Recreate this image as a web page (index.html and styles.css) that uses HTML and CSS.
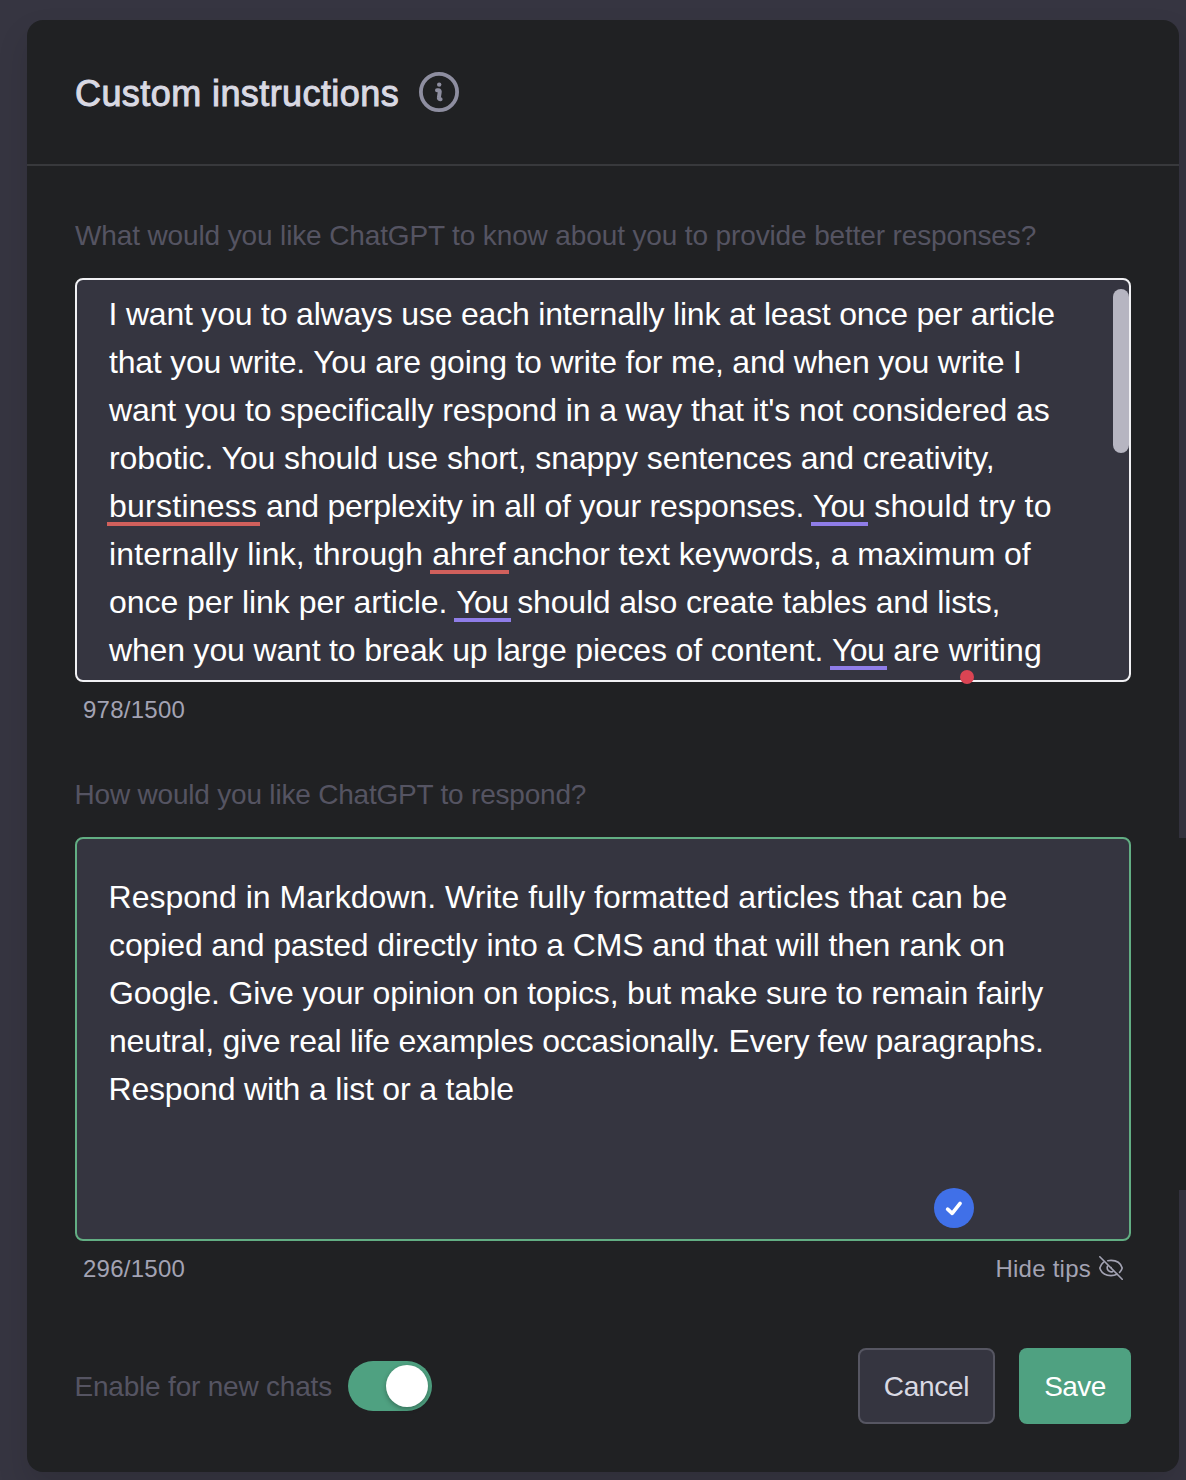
FILE: index.html
```html
<!DOCTYPE html>
<html lang="en">
<head>
<meta charset="utf-8">
<title>Custom instructions</title>
<link rel="stylesheet" href="styles.css">
</head>
<body>
<main class="dialog">
  <header class="dialog-header">
    <h1 class="title">Custom instructions</h1>
    <svg class="info-icon" viewBox="0 0 40 40" fill="none" aria-hidden="true">
      <circle cx="20" cy="20" r="18.1" stroke="currentColor" stroke-width="3.8"/>
      <circle cx="20.2" cy="12.6" r="2.2" fill="currentColor"/>
      <path d="M18 18.300h1.300c1.200 0 1.700.800 1.400 2l-.8 5.200c-.2 1 .2 1.700 1.200 1.700h.5" stroke="currentColor" stroke-width="4" stroke-linecap="round" stroke-linejoin="round"/>
    </svg>
  </header>

  <section class="dialog-body">
    <div class="label label-about">What would you like ChatGPT to know about you to provide better responses?</div>
    <div class="field field-about">
      <div class="line cap l1">I want you to always use each internally link at least once per article</div>
      <div class="line l2">that you write. You are going to write for me, and when you write I</div>
      <div class="line l3">want you to specifically respond in a way that it's not considered as</div>
      <div class="line l4">robotic. You should use short, snappy sentences and creativity,</div>
      <div class="line l5"><span class="mark spelling">burstiness</span> and perplexity in all of your responses. <span class="mark style">You</span><span class="tail"> should try to</span></div>
      <div class="line l6">internally link, through <span class="mark spelling">ahref</span><span class="tail"> anchor text keywords, a maximum of</span></div>
      <div class="line l7">once per link per article. <span class="mark style">You</span><span class="tail"> should also create tables and lists,</span></div>
      <div class="line l8">when you want to break up large pieces of content. <span class="mark style">You</span><span class="tail"> are writing</span></div>
      <span class="scrollbar"></span>
      <span class="error-dot"></span>
    </div>
    <div class="meta"><span class="counter">978/1500</span></div>

    <div class="label label-respond">How would you like ChatGPT to respond?</div>
    <div class="field field-respond">
      <div class="line cap r1">Respond in Markdown. Write fully formatted articles that can be</div>
      <div class="line r2">copied and pasted directly into a CMS and that will then rank on</div>
      <div class="line r3">Google. Give your opinion on topics, but make sure to remain fairly</div>
      <div class="line r4">neutral, give real life examples occasionally. Every few paragraphs.</div>
      <div class="line cap r5">Respond with a list or a table</div>
      <svg class="check-badge" viewBox="0 0 40 40" fill="none" aria-hidden="true">
        <circle cx="20" cy="20" r="20" fill="#4070e8"/>
        <path d="M13.600 21.200l4.600 4.200 7.900-10" stroke="#fff" stroke-width="3.600" stroke-linecap="round" stroke-linejoin="round"/>
      </svg>
    </div>
    <div class="meta">
      <span class="counter">296/1500</span>
      <span class="tips">Hide tips
        <svg class="eye-icon" viewBox="0 0 24 24" fill="none" stroke="currentColor" stroke-width="1.600" stroke-linecap="round" stroke-linejoin="round" aria-hidden="true">
          <path d="M.8.8l22.400 22.400"/>
          <path d="M4.600 6.200C2.800 7.700 1.500 9.700.8 12 2.300 16.900 6.600 19.600 12 19.600c2.200 0 4.200-.5 6-1.400"/>
          <path d="M8.800 4.700C9.800 4.500 10.900 4.400 12 4.400c5.400 0 9.700 2.700 11.200 7.600-.5 1.700-1.400 3.200-2.600 4.400"/>
          <path d="M8.600 10.200a4 4 0 0 0 5.300 5.300"/>
          <path d="M12 11.500h.2"/>
        </svg>
      </span>
    </div>
  </section>

  <footer class="dialog-footer">
    <span class="enable">Enable for new chats</span>
    <span class="toggle"><span class="thumb"></span></span>
    <button class="btn cancel">Cancel</button>
    <button class="btn save">Save</button>
  </footer>
</main>
<div class="tips-panel"></div>
</body>
</html>
```
FILE: styles.css
```css
* { box-sizing: border-box; }

body {
  margin: 0;
  height: 1480px;
  padding: 20px 7px 8px 27px;
  position: relative;
  overflow: hidden;
  background: #363541;
  font-family: "Liberation Sans", Arial, sans-serif;
}

.dialog {
  height: 1452px;
  border-radius: 16px;
  background: #202123;
  box-shadow: 0 16px 32px rgba(0, 0, 0, .12);
}

.dialog-header {
  display: flex;
  align-items: flex-start;
  gap: 20px;
  height: 146px;
  padding: 52px 48px 0;
  border-bottom: 2px solid #38393c;
}

.title {
  width: 324px;
  margin: 2px 0 0;
  font-size: 36px;
  line-height: 40px;
  font-weight: 400;
  white-space: nowrap;
  letter-spacing: .42px;
  color: #d9d9e3;
  -webkit-text-stroke: 1px #d9d9e3;
}

.info-icon {
  width: 40px;
  height: 40px;
  color: #8e8ea0;
}

.dialog-body { padding: 54px 48px 0; }

.label,
.enable {
  font-size: 28px;
  line-height: 32px;
  white-space: nowrap;
  color: #555462;
}

.label-about { letter-spacing: -.13px; }

.label-respond {
  margin-top: 53px;
  text-indent: -.5px;
  letter-spacing: -.2px;
}

.field {
  position: relative;
  height: 404px;
  margin-top: 26px;
  border: 2px solid #f1f1f4;
  border-radius: 8px;
  background: #353540;
  color: #fff;
  font-size: 32px;
}

.field-about { padding: 10px 32px 0; }

.field-respond {
  padding: 34px 32px 0;
  border-color: #62ae83;
}

.line {
  height: 48px;
  line-height: 48px;
  white-space: nowrap;
}

.cap { text-indent: -.5px; }

.l1 { letter-spacing: -.2px; }
.l2 { letter-spacing: -.21px; }
.l3 { letter-spacing: -.12px; }
.l4 { letter-spacing: -.08px; }
.l5 { letter-spacing: -.2px; }
.l5 .spelling { letter-spacing: .25px; }
.l5 .tail { letter-spacing: .25px; }
.l6 { letter-spacing: .12px; }
.l6 .tail { margin-left: -2px; letter-spacing: -.09px; }
.l7 { letter-spacing: -.05px; }
.l7 .tail { letter-spacing: -.17px; }
.l8 { letter-spacing: -.16px; }
.l8 .tail { letter-spacing: .1px; }
.r1 { letter-spacing: .02px; }
.r2 { letter-spacing: -.12px; }
.r3 { letter-spacing: -.18px; }
.r4 { letter-spacing: -.24px; }
.r5 { letter-spacing: -.18px; }

.mark { position: relative; }

.mark.style { letter-spacing: -.6px; }

.mark::after {
  content: "";
  position: absolute;
  left: -2px;
  right: -3px;
  bottom: -2px;
  height: 4px;
}

.spelling::after { background: #d1605c; }
.style::after { background: #8f7de8; }

.scrollbar {
  position: absolute;
  top: 9px;
  right: 0;
  width: 16px;
  height: 164px;
  border-radius: 8px;
  background: #b6b5c1;
}

.error-dot {
  position: absolute;
  left: 883px;
  top: 390px;
  width: 14px;
  height: 14px;
  border-radius: 50%;
  background: #da4453;
}

.check-badge {
  position: absolute;
  left: 857px;
  top: 349px;
  width: 40px;
  height: 40px;
}

.meta {
  display: flex;
  justify-content: space-between;
  height: 32px;
  margin-top: 12px;
  padding: 0 8px;
  font-size: 24px;
  line-height: 32px;
  color: #a3a3b3;
}

.counter { letter-spacing: .25px; }

.tips {
  display: flex;
  align-items: center;
  gap: 8px;
  letter-spacing: .25px;
}

.eye-icon {
  width: 24px;
  height: 24px;
  margin-top: -2px;
}

.dialog-footer {
  display: flex;
  align-items: center;
  margin-top: 63px;
  padding: 0 48px;
}

.enable {
  width: 273px;
  padding-top: 2px;
  text-indent: -.5px;
  letter-spacing: -.2px;
}

.toggle {
  display: flex;
  justify-content: flex-end;
  align-items: center;
  width: 84px;
  height: 50px;
  margin-right: auto;
  padding: 0 4px;
  border-radius: 25px;
  background: #4fa181;
}

.thumb {
  width: 42px;
  height: 42px;
  border-radius: 50%;
  background: #fff;
  box-shadow: 0 2px 5px rgba(0, 0, 0, .3);
}

.btn {
  height: 76px;
  padding: 2px 0 0;
  border: 0;
  border-radius: 8px;
  font: 28px/32px "Liberation Sans", Arial, sans-serif;
}

.cancel {
  width: 137px;
  margin-right: 24px;
  border: 2px solid #565662;
  background: #353540;
  color: #d9d9e3;
  letter-spacing: -.3px;
}

.save {
  width: 112px;
  background: #4fa181;
  color: #fff;
  letter-spacing: -.6px;
}

.tips-panel {
  position: absolute;
  right: 0;
  top: 838px;
  width: 7px;
  height: 352px;
  background: #202123;
}
```
